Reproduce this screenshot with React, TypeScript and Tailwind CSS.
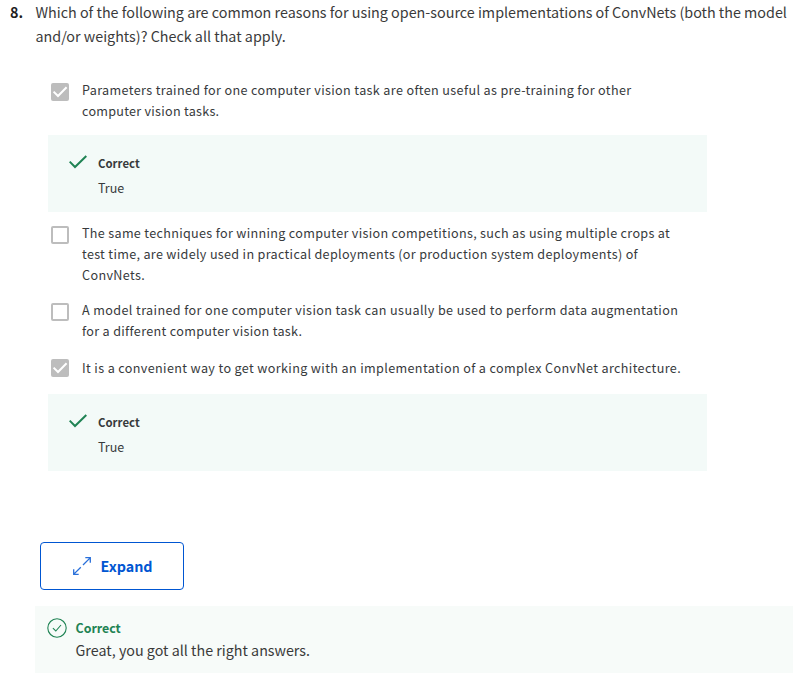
import type { ReactNode } from 'react';

function Checkbox({ checked }: { checked: boolean }) {
  return checked ? (
    <span className="block size-[18px] shrink-0 rounded-[2px] bg-[#bdbdbd]">
      <svg viewBox="0 0 18 18" className="size-[18px]" fill="none" stroke="#fff" strokeWidth="2">
        <path d="M2.6 8.6 7 13 15.6 4.2" />
      </svg>
    </span>
  ) : (
    <span className="block size-[18px] shrink-0 rounded-[2px] border-2 border-[#bdbdbd] bg-white" />
  );
}

function Option({ checked = false, lines }: { checked?: boolean; lines: ReactNode }) {
  return (
    <label className="flex gap-[13px] pl-[51px]">
      <span className="pt-1">
        <Checkbox checked={checked} />
      </span>
      <span className="text-[12.6px] leading-[21px] tracking-[0.36px] whitespace-nowrap text-[#373a3c]">{lines}</span>
    </label>
  );
}

function Feedback() {
  return (
    <div className="ml-12 flex h-[77px] w-[659px] bg-[#f3faf8] pl-[21px] text-[#373a3c]">
      <svg viewBox="0 0 18 14" className="mt-5 h-3.5 w-[18px] shrink-0" fill="none" stroke="#1f8354" strokeWidth="2">
        <path d="M0.7 6.6 6 12 17.3 1" />
      </svg>
      <div className="pt-4 pl-[11px]">
        <p className="text-[11.4px] leading-6 font-bold">Correct</p>
        <p className="pt-px text-[12.5px] leading-6">True</p>
      </div>
    </div>
  );
}

export default function App() {
  return (
    <main className="h-[673px] w-[793px] overflow-hidden bg-white font-['Noto_Sans_CJK_SC',sans-serif] text-[#3a3a3a]">
      <div className="flex h-[79px] text-[14.34px] leading-6 whitespace-nowrap">
        <span className="w-[35.5px] shrink-0 pl-2.5 font-bold text-[#1f1f1f]">8.</span>
        <p>
          Which of the following are common reasons for using open-source implementations of ConvNets (both the model
          <br />
          and/or weights)? Check all that apply.
        </p>
      </div>

      <div className="h-14">
        <Option
          checked
          lines={
            <>
              <span className="tracking-[0.36px]">Parameters trained for one computer vision task are often useful as pre-training for other</span>
              <br />
              <span className="tracking-[0.27px]">computer vision tasks.</span>
            </>
          }
        />
      </div>
      <Feedback />

      <div className="flex h-[182px] flex-col pt-2.5">
        <Option
          lines={
            <>
              <span className="tracking-[0.32px]">The same techniques for winning computer vision competitions, such as using multiple crops at</span>
              <br />
              <span className="tracking-[0.32px]">test time, are widely used in practical deployments (or production system deployments) of</span>
              <br />
              ConvNets.
            </>
          }
        />
        <div className="pt-3.5 pb-[15px]">
          <Option
            lines={
              <>
                <span className="tracking-[0.385px]">A model trained for one computer vision task can usually be used to perform data augmentation</span>
                <br />
                <span className="tracking-[0.33px]">for a different computer vision task.</span>
              </>
            }
          />
        </div>
        <div className="flex gap-[13px] pl-[51px]">
          <span className="pt-[3px]">
            <Checkbox checked />
          </span>
          <span className="pt-px text-[12.6px] leading-[21px] tracking-[0.365px] whitespace-nowrap text-[#373a3c]">
            It is a convenient way to get working with an implementation of a complex ConvNet architecture.
          </span>
        </div>
      </div>
      <Feedback />

      <button className="mt-[71px] ml-10 flex h-12 w-36 items-center rounded-[4px] border border-[#0056d2] pl-8 text-[14.3px] font-bold text-[#0056d2]">
        <svg viewBox="0 0 18 18" className="size-[18px] shrink-0" fill="none" stroke="#2a70da" strokeWidth="1.3">
          <path d="M0.6 17.4 7.8 10.2M10 8 17.4 0.6M12.3 0.7h5V5.7M0.7 12.3v5H5.7" />
        </svg>
        <span className="pl-[9.5px]">Expand</span>
      </button>

      <div className="mt-4 ml-[35px] flex h-[67px] bg-[#f7fbf9] pt-3 pl-3">
        <svg viewBox="0 0 20 20" className="size-5 shrink-0" fill="none" stroke="#1f8354" strokeWidth="1.1">
          <circle cx="10" cy="10" r="9.2" />
          <path d="M5.9 10.2 8.8 13 14 7" />
        </svg>
        <div className="pl-[8.5px]">
          <p className="text-[12.4px] leading-5 font-bold text-[#1f8354]">Correct</p>
          <p className="text-[14.3px] leading-6">Great, you got all the right answers.</p>
        </div>
      </div>
    </main>
  );
}
